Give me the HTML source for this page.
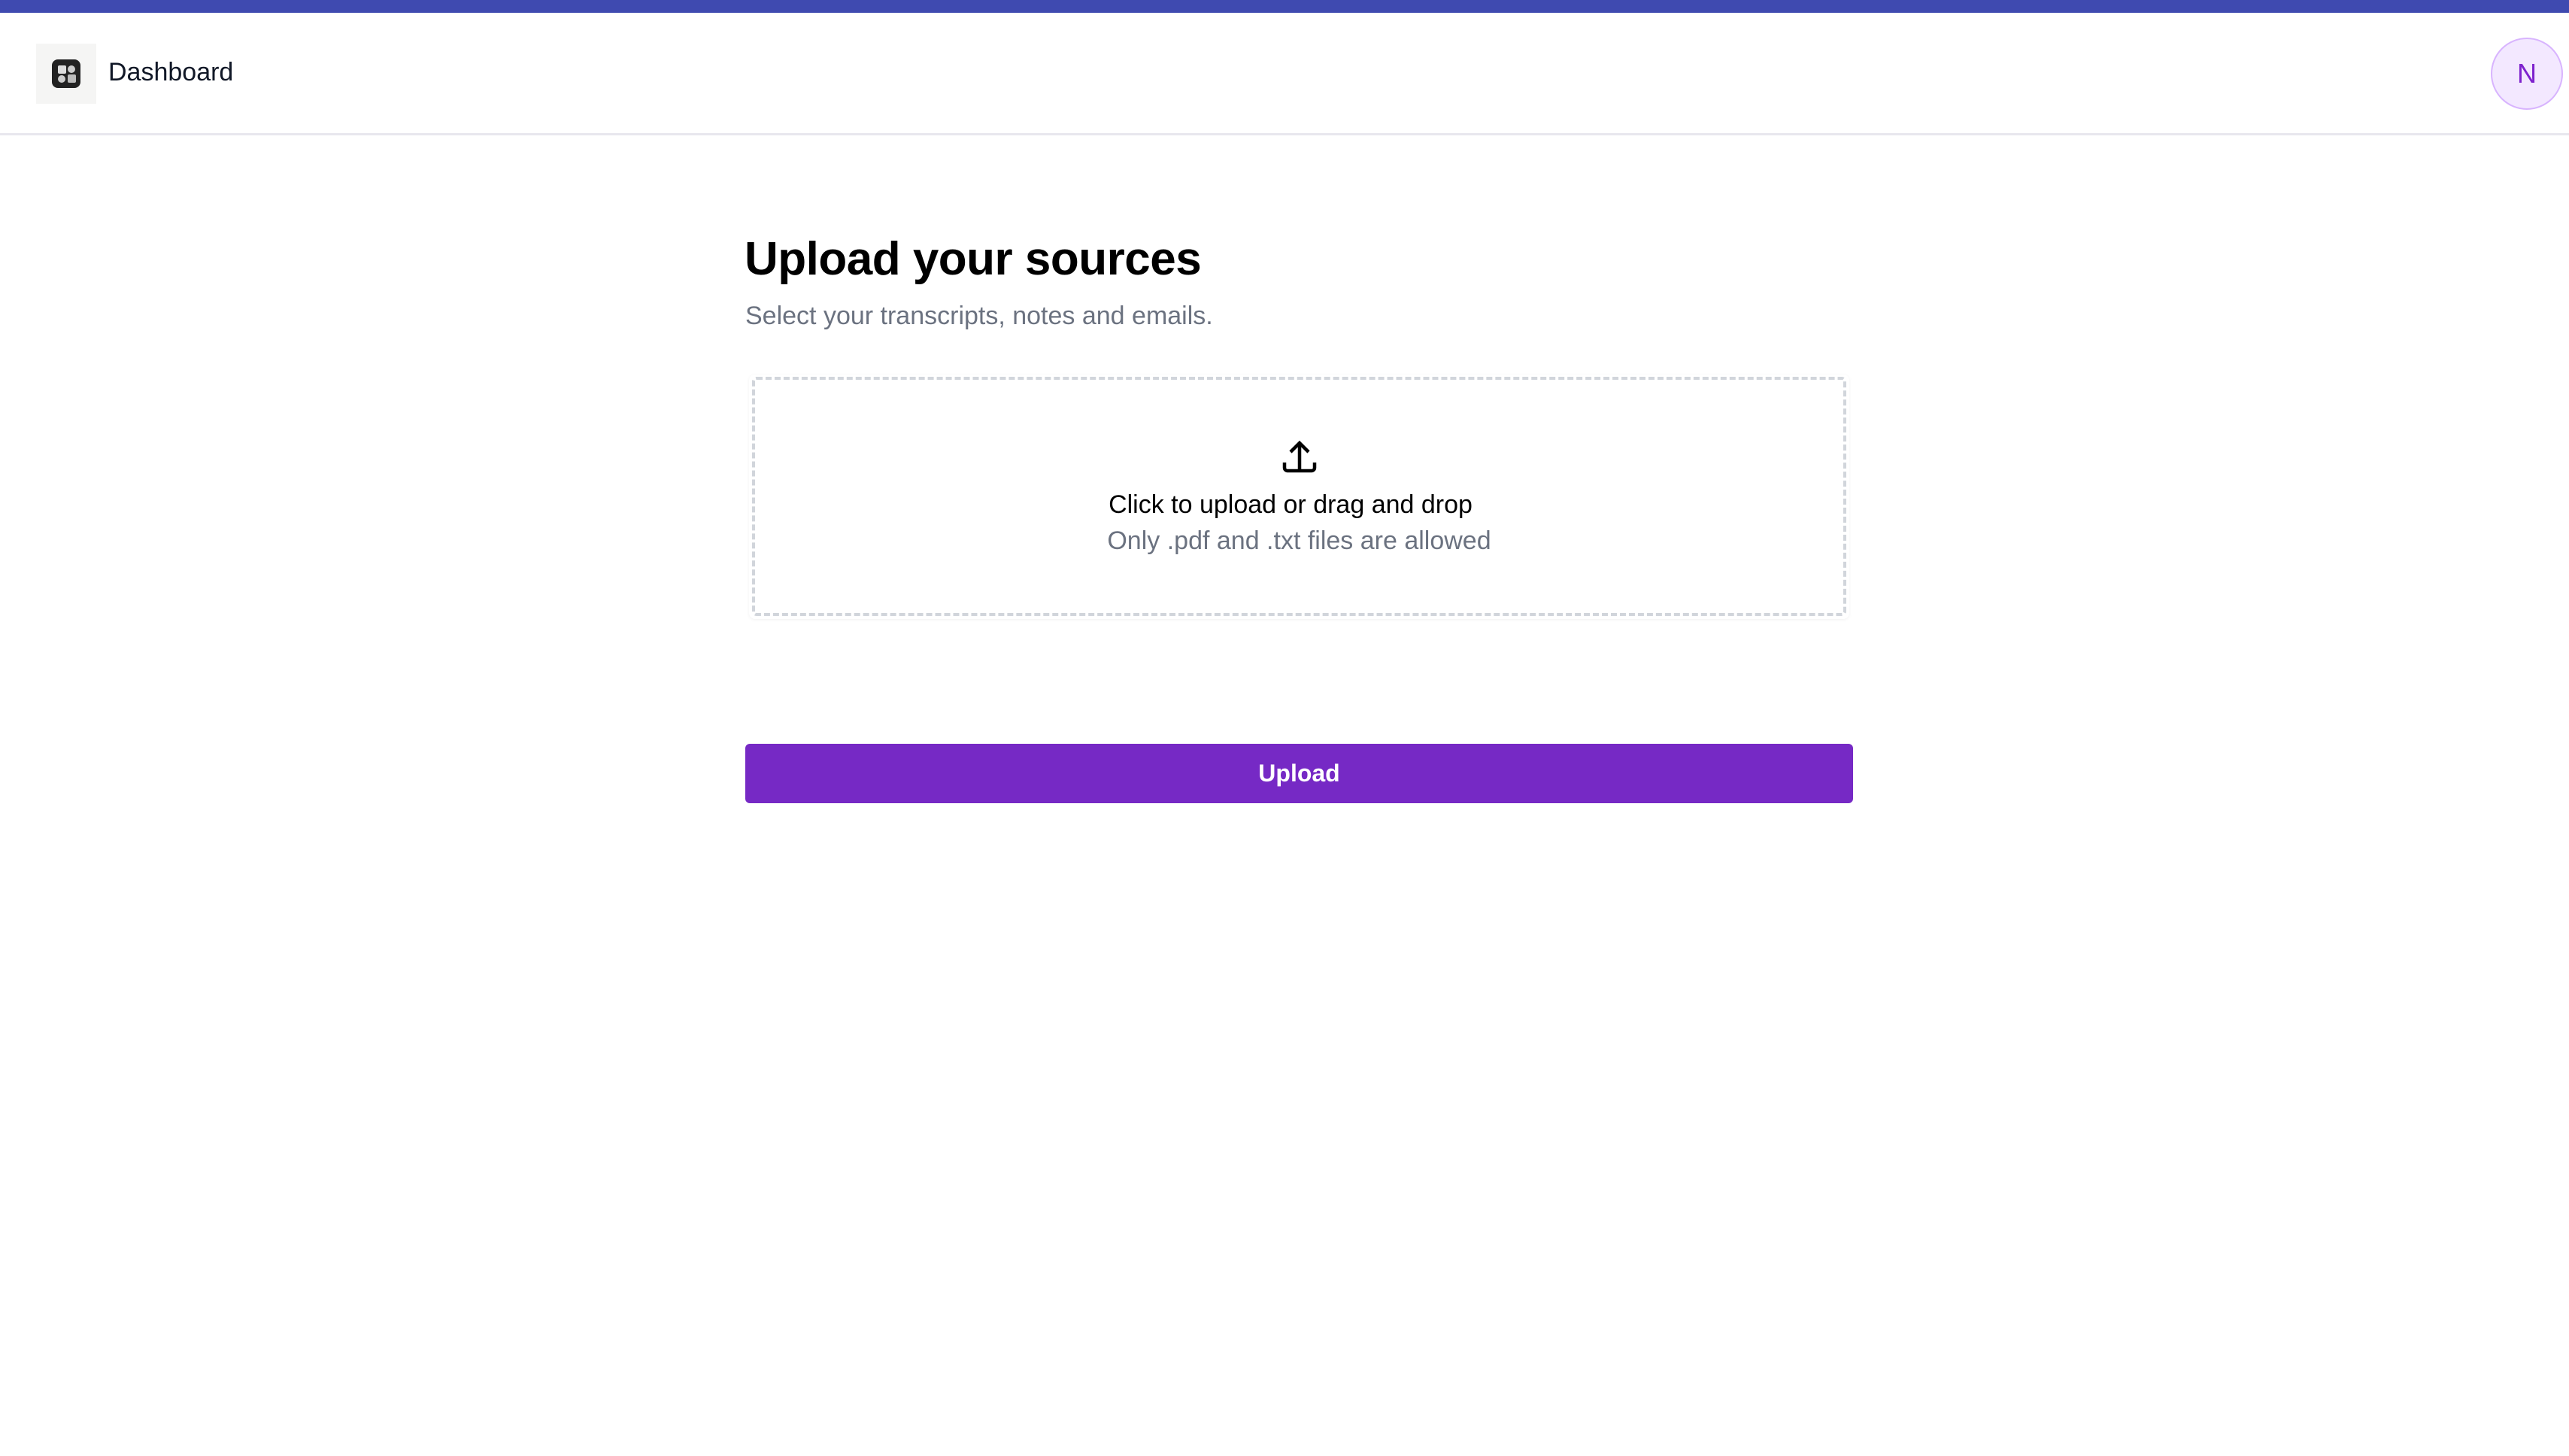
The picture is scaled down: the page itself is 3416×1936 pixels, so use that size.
<!DOCTYPE html>
<html><head><meta charset="utf-8"><style>
*{margin:0;padding:0;box-sizing:border-box}
body{width:3416px;height:1936px;background:#fff;font-family:"Liberation Sans",sans-serif;position:relative;overflow:hidden}
.abs{position:absolute}
</style></head><body>
<div class="abs" style="left:0;top:0;width:3416px;height:17px;background:#3f4ab0"></div>
<div class="abs" style="left:0;top:177px;width:3416px;height:3px;background:#e8e7ee"></div>
<div class="abs" style="left:48px;top:58px;width:80px;height:80px;background:#f5f5f4"></div>
<svg class="abs" style="left:68px;top:78px" width="40" height="40" viewBox="0 0 40 40">
<rect x="1" y="1" width="38" height="38" rx="8" fill="#222"/>
<rect x="9" y="9" width="11" height="11" rx="2" fill="#ddd"/>
<circle cx="27" cy="14" r="5" fill="#ccc"/>
<circle cx="14" cy="27" r="5" fill="#ccc"/>
<rect x="22" y="21" width="11" height="11" rx="2" fill="#bbb"/>
</svg>
<div class="abs" style="left:144px;top:76px;font-size:34px;line-height:40px;color:#111827">Dashboard</div>
<div class="abs" style="left:3312px;top:50px;width:96px;height:96px;border-radius:50%;background:#f3e8ff;border:2px solid #d8b4fe;color:#7e22ce;font-size:36px;line-height:92px;text-align:center">N</div>

<div class="abs" style="left:990px;top:305px;font-size:62px;font-weight:bold;letter-spacing:-0.5px;line-height:80px;color:#000">Upload your sources</div>
<div class="abs" style="left:991px;top:400px;font-size:34px;line-height:40px;color:#6b7280">Select your transcripts, notes and emails.</div>

<div class="abs" style="left:996px;top:498px;width:1463px;height:325px;border-radius:8px;box-shadow:0 1px 4px rgba(0,0,0,0.06)"></div>
<div class="abs" style="left:1000px;top:501px;width:1455px;height:318px;border:4px dashed #d1d5db;border-radius:6px"></div>
<svg class="abs" style="left:1703px;top:582px" width="50" height="50" viewBox="0 0 50 50">
<path d="M25 42V8M13 19L25 7 37 19" fill="none" stroke="#000" stroke-width="4.5" stroke-linejoin="miter"/>
<path d="M5 33v7a4 4 0 0 0 4 4h32a4 4 0 0 0 4-4v-7" fill="none" stroke="#000" stroke-width="4.5"/>
</svg>
<div class="abs" style="left:1000px;top:651px;width:1432px;text-align:center;font-size:34px;line-height:40px;color:#000">Click to upload or drag and drop</div>
<div class="abs" style="left:1000px;top:699px;width:1455px;text-align:center;font-size:34px;line-height:40px;color:#6b7280">Only .pdf and .txt files are allowed</div>

<div class="abs" style="left:991px;top:989px;width:1473px;height:79px;background:#7629c5;border-radius:6px;color:#fff;font-weight:bold;font-size:32px;line-height:79px;text-align:center">Upload</div>
</body></html>
